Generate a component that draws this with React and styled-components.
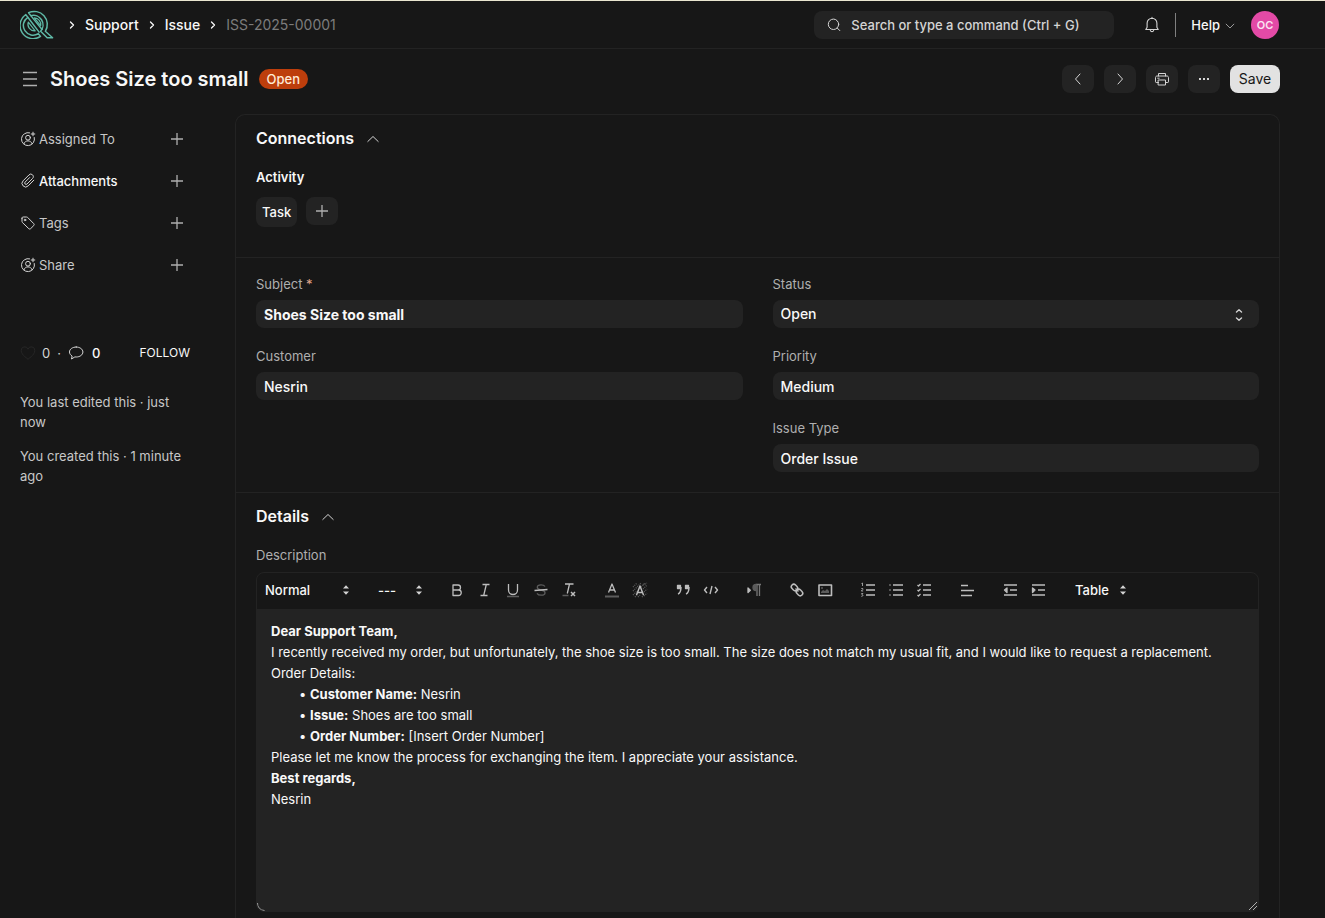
import React from "react";
import styled, { createGlobalStyle } from "styled-components";

const c = {
  bg: "#171717",
  control: "#232323",
  line: "#232323",
  text: "#f8f8f8",
  soft: "#d4d4d4",
  label: "#afafaf",
  muted: "#7c7c7c",
};

const GlobalStyle = createGlobalStyle`
  *, *::before, *::after { box-sizing: border-box; }
  body {
    margin: 0;
    background: ${c.bg};
    color: ${c.text};
    font-family: Inter, "Liberation Sans", sans-serif;
    font-size: 13px;
    line-height: 20px;
    color-scheme: dark;
  }
  button, input, select { font: inherit; color: inherit; }
  a { color: inherit; text-decoration: none; }
  svg { display: block; flex: none; }
`;

const Page = styled.div`
  min-height: 100vh;
  display: flex;
  flex-direction: column;
  border-top: 1px solid #e9e6d0;
`;

const Navbar = styled.header`
  display: flex;
  align-items: center;
  justify-content: space-between;
  height: 48px;
  padding: 0 46px 0 20px;
  border-bottom: 1px solid ${c.line};
`;

const Crumbs = styled.nav`
  display: flex;
  align-items: center;
  gap: 9px;
  font-size: 14px;
  font-weight: 500;
`;

const LogoLink = styled.a`
  margin-right: 5px;
`;

const Current = styled.span`
  color: ${c.muted};
  font-weight: 400;
`;

const NavTools = styled.div`
  display: flex;
  align-items: center;
`;

const Search = styled.label`
  display: flex;
  align-items: center;
  gap: 9px;
  width: 300px;
  height: 28px;
  margin-right: 29px;
  padding: 0 12px;
  border-radius: 8px;
  background: ${c.control};
`;

const SearchInput = styled.input`
  flex: 1;
  min-width: 0;
  padding: 0;
  border: 0;
  outline: 0;
  background: none;
  font-size: 13px;
  font-weight: 500;
  &::placeholder { color: ${c.soft}; opacity: 1; }
`;

const PlainButton = styled.button`
  display: flex;
  align-items: center;
  gap: ${(p) => p.$gap || 0}px;
  padding: 0;
  border: 0;
  background: none;
  color: ${(p) => p.$color || c.text};
  font-weight: ${(p) => p.$weight || 400};
  font-size: ${(p) => p.$size || 13}px;
`;

const Divider = styled.span`
  width: 1px;
  height: 24px;
  margin: 0 15px 0 14px;
  background: #808080;
`;

const Avatar = styled.button`
  width: 28px;
  height: 28px;
  margin-left: 15px;
  padding: 0;
  border: 0;
  border-radius: 50%;
  background: #e34aa6;
  color: #fbe4f2;
  font-size: 11px;
  font-weight: 600;
`;

const PageHead = styled.div`
  display: flex;
  align-items: center;
  justify-content: space-between;
  padding: 16px 45px 21px 20px;
`;

const TitleGroup = styled.div`
  display: flex;
  align-items: center;
`;

const Title = styled.h1`
  margin: 0 10px;
  font-size: 20px;
  line-height: 28px;
  font-weight: 600;
`;

const Badge = styled.span`
  padding: 0 8px;
  border-radius: 10px;
  background: #bd3e0c;
  color: #ffead6;
  font-weight: 500;
`;

const Actions = styled.div`
  display: flex;
  gap: 10px;
`;

const IconButton = styled.button`
  display: flex;
  align-items: center;
  justify-content: center;
  width: 32px;
  height: 28px;
  padding: 0;
  border: 0;
  border-radius: 8px;
  background: ${c.control};
  color: ${c.soft};
`;

const SaveButton = styled.button`
  width: 50px;
  height: 28px;
  padding: 0;
  border: 0;
  border-radius: 8px;
  background: #e2e2e2;
  color: #171717;
  font-size: 14px;
`;

const Body = styled.div`
  flex: 1;
  display: grid;
  grid-template-columns: 215px minmax(0, 1fr);
  padding: 0 45px 0 20px;
`;

const Sidebar = styled.aside`
  width: 170px;
  padding-top: 11px;
`;

const SideList = styled.ul`
  display: flex;
  flex-direction: column;
  gap: 14px;
  margin: 0;
  padding: 0;
  list-style: none;
`;

const SideRow = styled.li`
  display: flex;
  align-items: center;
  gap: 3px;
  height: 28px;
  padding-right: 7px;
  color: ${(p) => (p.$strong ? c.text : "#c7c7c7")};
  font-weight: ${(p) => (p.$strong ? 500 : 400)};
`;

const SideLabel = styled.span`
  flex: 1;
`;

const Stats = styled.div`
  display: flex;
  align-items: center;
  gap: 7px;
  margin-top: 64px;
  color: ${c.soft};
`;

const Follow = styled(PlainButton)`
  margin-left: auto;
`;

const Activity = styled.div`
  display: flex;
  flex-direction: column;
  gap: 14px;
  margin-top: 29px;
  color: #c7c7c7;
`;

const Note = styled.p`
  margin: 0;
`;

const Card = styled.main`
  border: 1px solid ${c.line};
  border-bottom: 0;
  border-radius: 10px 10px 0 0;
`;

const Section = styled.section`
  padding: ${(p) => p.$top || 11}px 20px ${(p) => p.$bottom || 20}px;
  & + & { border-top: 1px solid ${c.line}; }
`;

const SectionTitle = styled.h2`
  display: flex;
  align-items: center;
  gap: 12px;
  margin: 0;
  font-size: 16px;
  line-height: 24px;
  font-weight: 600;
`;

const SubTitle = styled.h3`
  margin: 17px 0 10px;
  font-size: 13px;
  line-height: 20px;
  font-weight: 600;
`;

const Links = styled.div`
  display: flex;
  gap: 9px;
`;

const DocLink = styled.a`
  padding: 5px 6px;
  border-radius: 8px;
  background: ${c.control};
  font-weight: 500;
`;

const Columns = styled.div`
  display: grid;
  grid-template-columns: 1fr 1fr;
  gap: 30px;
`;

const Column = styled.div`
  display: flex;
  flex-direction: column;
  gap: 18px;
`;

const Field = styled.div`
  display: flex;
  flex-direction: column;
  gap: 6px;
`;

const FieldLabel = styled.label`
  color: ${c.label};
`;

const Required = styled.span`
  color: #e0a68a;
`;

const fieldBox = `
  width: 100%;
  height: 28px;
  padding: 0 8px;
  border: 0;
  outline: 0;
  border-radius: 8px;
  background: ${c.control};
  font-size: 14px;
`;

const TextInput = styled.input`
  ${fieldBox}
  font-weight: ${(p) => (p.$bold ? 700 : 500)};
`;

const SelectWrap = styled.div`
  position: relative;
  svg {
    position: absolute;
    right: 14px;
    top: 9px;
    pointer-events: none;
  }
`;

const Select = styled.select`
  ${fieldBox}
  appearance: none;
  font-weight: 500;
`;

const EditorLabel = styled.div`
  margin: 17px 0 7px;
  color: ${c.label};
`;

const Editor = styled.div`
  position: relative;
  display: flex;
  flex-direction: column;
  border: 1px solid ${c.line};
  border-radius: 8px;
  overflow: hidden;
`;

const Toolbar = styled.div`
  display: flex;
  align-items: center;
  gap: 15px;
  height: 36px;
  padding-bottom: 3px;
`;

const ToolGroup = styled.div`
  display: flex;
`;

const Tool = styled.button`
  width: 28px;
  height: 24px;
  padding: 3px 5px;
  border: 0;
  background: none;
`;

const Picker = styled.div`
  position: relative;
  width: ${(p) => p.$width}px;
  svg {
    position: absolute;
    right: 0;
    top: 1px;
    pointer-events: none;
  }
`;

const PickerSelect = styled.select`
  display: block;
  width: 100%;
  height: 20px;
  padding: 0 0 0 8px;
  border: 0;
  outline: 0;
  appearance: none;
  background: ${c.bg};
  font-weight: 500;
`;

const Content = styled.div`
  min-height: 302px;
  padding: 12px 14px;
  background: ${c.control};
  line-height: 21px;
  outline: 0;
  p { margin: 0; }
  ul { margin: 0; padding-left: 39px; list-style: none; }
  li { position: relative; }
  li::before {
    content: "•";
    position: absolute;
    left: -11px;
  }
  b { font-weight: 700; }
`;

const CornerLeft = styled.svg`
  position: absolute;
  left: 0;
  bottom: 0;
`;

const CornerRight = styled.svg`
  position: absolute;
  right: 0;
  bottom: 0;
`;

/* ---------- icons ---------- */

const Icon = ({ size = 16, box = 16, width = 1, children, ...rest }) => (
  <svg width={size} height={size} viewBox={`0 0 ${box} ${box}`} fill="none" stroke="currentColor"
    strokeWidth={width} strokeLinecap="round" strokeLinejoin="round" aria-hidden="true" {...rest}>
    {children}
  </svg>
);

const Logo = () => (
  <svg width="34" height="29" viewBox="0 0 34 29" fill="none" stroke="#5fb8a6" strokeWidth="1.5" strokeLinejoin="round" aria-hidden="true">
    <path d="M5.800 4.600A13 13 0 0 0 20.500 26.400L18.300 23.600A9.600 9.600 0 0 1 7.800 7.300z" />
    <path d="M8.600 2.700A13 13 0 0 1 25.300 21.300L32.600 27.800H27.200L20.600 21.200A9.600 9.600 0 0 0 10.800 5.600z" />
    <path d="M7.800 7.300L19.500 22.600M10.800 5.600L22.500 20" />
    <path d="M8.300 12.200A6.600 6.600 0 0 0 15.200 20.900zM14.300 7.900A6.600 6.600 0 0 1 20.700 15.700z" strokeWidth="1.200" />
  </svg>
);

const CrumbArrow = () => (
  <Icon size={8} box={8} width={1.3}><path d="M2.500 1l3 3-3 3" /></Icon>
);

const Plus = ({ size = 12 }) => (
  <Icon size={size} box={12} width={1.3} color="#afafaf"><path d="M6 0v12M0 6h12" strokeLinecap="butt" /></Icon>
);

const UserPlus = () => (
  <Icon color={c.soft}>
    <path d="M9.600 1.800A6.500 6.500 0 1 0 14.300 6.500" />
    <circle cx="8" cy="6.700" r="2.400" />
    <path d="M3.900 12.800c.6-1.900 2.200-2.900 4.100-2.900s3.500 1 4.100 2.900M13 1.200v3.600M11.200 3h3.600" />
  </Icon>
);

const Clip = () => (
  <Icon color={c.soft}>
    <path d="M13.800 7.200l-5.600 5.700a3.600 3.600 0 0 1-5.100-5.100l5.900-5.900a2.500 2.500 0 0 1 3.600 0c1 1 1 2.500 0 3.500L7 11a1.300 1.300 0 0 1-1.900-1.900l4.600-4.600" />
  </Icon>
);

const Tag = () => (
  <Icon color={c.soft}>
    <path d="M2 3.200v3.300c0 .4.100.7.400 1l6.400 6.200c.5.500 1.300.5 1.800 0l3.200-3.200c.5-.5.500-1.300 0-1.800L7.600 2.400c-.3-.3-.6-.4-1-.4H3.200C2.500 2 2 2.500 2 3.200z" />
    <circle cx="5" cy="5" r=".8" />
  </Icon>
);

const Heart = () => (
  <Icon color="#262626">
    <path d="M8 14S1.200 10.200 1.200 5.600A3.500 3.500 0 0 1 8 4.200a3.500 3.500 0 0 1 6.800 1.400C14.800 10.200 8 14 8 14z" />
  </Icon>
);

const Comment = () => (
  <Icon color={c.soft}>
    <path d="M8.200 2C4.500 2 1.500 4.100 1.500 7c0 1.700 1 3.100 2.600 4L3.500 14l3.400-2.100 1.300.1c3.700 0 6.700-2.200 6.700-5S11.900 2 8.200 2z" />
  </Icon>
);

const Bell = () => (
  <Icon size={18} box={18} width={1.100} color={c.soft}>
    <path d="M2.800 13.500h12.400l-1.300-2.300V7.200a4.900 4.900 0 0 0-9.800 0v4L2.800 13.500zM9 1.200v1.200M7.300 14.400a1.800 1.800 0 0 0 3.400 0" />
  </Icon>
);

const SearchIcon = () => (
  <Icon color={c.soft}><circle cx="7.500" cy="7.300" r="5.200" /><path d="M11.300 11.100l2.500 2.500" /></Icon>
);

const Chevron = ({ up, size = 14 }) => (
  <Icon size={size} box={14} color={up ? c.soft : c.label}>
    <path d={up ? "M1.800 10.500L7 5.500l5.200 5" : "M2.500 6l4.500 4.500L11.500 6"} />
  </Icon>
);

const Printer = () => (
  <Icon>
    <path d="M4.500 5V2.500h7V5M4.500 11.500H2.200c-.4 0-.7-.3-.7-.7V6.500C1.500 5.700 2.200 5 3 5h10c.8 0 1.500.7 1.500 1.500v4.300c0 .4-.3.7-.7.7h-2.300M4.500 9h7v5h-7zM3.700 7.200h1.500" />
  </Icon>
);

const Dots = () => (
  <Icon size={12} box={12} fill="currentColor" stroke="none">
    <rect x="1" y="5" width="2" height="2" /><rect x="5" y="5" width="2" height="2" /><rect x="9" y="5" width="2" height="2" />
  </Icon>
);

const UpDown = () => (
  <Icon size={12} box={12} width={1.400} color={c.soft}><path d="M3.500 3L6 .8 8.500 3M3.500 9L6 11.200 8.500 9" /></Icon>
);

const PickerArrows = () => (
  <svg width="18" height="18" viewBox="0 0 18 18" fill={c.soft} aria-hidden="true">
    <path d="M6 7.500L9 4.200l3 3.300zM6 10.500l3 3.300 3-3.300z" />
  </svg>
);

const S = "#bdbdbd";
const DIM = "#5c5c5c";

const GLYPHS = {
  Bold: <path d="M5 4h5a2.500 2.500 0 0 1 0 5H5zM5 9h5.500a2.500 2.500 0 0 1 0 5.500H5z" />,
  Italic: <path d="M6.500 3.500h7M4.500 14.500h7M10.300 3.500L7.700 14.500" />,
  Underline: <><path d="M4.500 3v6a4.500 4.500 0 0 0 9 0V3" /><path d="M3 15.500h12" stroke={DIM} /></>,
  Strike: <><path d="M13 5.500C12.200 4.200 10.800 3.800 9 3.800c-2.300 0-3.700 1-3.700 2.500C5.300 8 7 8.600 9 9s4 1 4 2.700c0 1.600-1.600 2.500-3.800 2.500-1.900 0-3.400-.6-4.200-1.900" stroke={DIM} /><path d="M2.500 9.500l13-1" /></>,
  "Clear formatting": <><path d="M5 3h8.500M9.500 3L7.300 12.500" /><path d="M2.500 14.500h6" stroke={DIM} /><path d="M11 11l4 4M15 11l-4 4" strokeWidth="1.500" /></>,
  "Text colour": <><path d="M5.500 11.500L9 3l3.500 8.500M6.500 9h5" strokeWidth="1.300" /><path d="M2 15.500h14" stroke={DIM} strokeWidth="2" /></>,
  "Background colour": <><path d="M2 6l4-4M2 10l8-8M2 14l4-4M10 6l4-4M4 16l2-2M12 8l4-4M12 4l4-2M13 11l3-3M13 15l3-3M7 16l2-2M11 16l2-2" stroke={DIM} strokeDasharray="1 1" /><path d="M5.500 14L9 5l3.500 9M6.500 11.500h5" strokeWidth="1.500" /></>,
  Quote: <><rect x="3.500" y="4.500" width="3" height="3" fill={S} /><rect x="11.500" y="4.500" width="3" height="3" fill={S} /><path d="M7 6c0 4-.5 6-3 7M15 6c0 4-.5 6-3 7" strokeWidth="1.400" /></>,
  Code: <path d="M5 6L2.500 9 5 12M13 6l2.500 3-2.500 3M10 5L8 13" strokeWidth="1.400" />,
  Direction: <><path d="M3 7v4.500L5.300 9.200z" fill={S} /><path d="M12 4v11M14.500 4v11M16 3.500h-5" stroke="#777" /><path d="M11 3.500a3 3 0 0 0 0 6z" fill={DIM} stroke={DIM} /></>,
  Link: <><rect x="-3.500" y="-2.500" width="7" height="5" rx="2.500" transform="translate(6.500 6.500) rotate(45)" strokeWidth="1.500" /><rect x="-3.500" y="-2.500" width="7" height="5" rx="2.500" transform="translate(11.500 11.500) rotate(45)" strokeWidth="1.500" /><path d="M7.500 7.500l3 3" strokeWidth="1.500" /></>,
  Image: <><rect x="3" y="4" width="12.500" height="10.500" strokeWidth="1.600" /><path d="M5 12v-1l2-2 2 1 2-2 2 2v2z" fill={DIM} stroke="none" /><circle cx="6" cy="7" r="1" fill={DIM} stroke="none" /></>,
  "Ordered list": <><path d="M7 4h9M7 9h9M7 14h9" /><path d="M2.500 2.500l1-.5v3M2.300 7.500h1.500v1L2.300 10h1.800M2.300 12.500h1.600l-1 1.200c1.500 0 1.200 2-.6 1.600" strokeWidth=".8" /></>,
  "Bullet list": <><path d="M6 4h10M6 9h10M6 14h10" /><path d="M2.500 4h1M2.500 9h1M2.500 14h1" /></>,
  Checklist: <><path d="M8 4h8M8 9h8M8 14h8" /><path d="M2.500 4l1 1 2-2M2.500 9l1 1 2-2M2.500 14l1 1 2-2" strokeWidth="1.300" /></>,
  Align: <path d="M3 4.500h7M3 9.500h13M3 14.500h11" />,
  Outdent: <><path d="M3 4h13M3 14h13M9 9h7" /><path d="M6 7v4.500L3.500 9z" fill={S} /></>,
  Indent: <><path d="M3 4h13M3 14h13M9 9h7" /><path d="M3.500 7v4.500L6 9z" fill={S} /></>,
};

const ToolButton = ({ name }) => (
  <Tool type="button" aria-label={name}>
    <Icon size={18} box={18} width={1.3} color={S} strokeLinecap="butt">{GLYPHS[name]}</Icon>
  </Tool>
);

const Tools = ({ names }) => (
  <ToolGroup>{names.map((n) => <ToolButton key={n} name={n} />)}</ToolGroup>
);

const ToolPicker = ({ width, label, value }) => (
  <Picker $width={width}>
    <PickerSelect aria-label={label}><option>{value}</option></PickerSelect>
    <PickerArrows />
  </Picker>
);

const SideItem = ({ icon, label, strong }) => (
  <SideRow $strong={strong}>
    {icon}
    <SideLabel>{label}</SideLabel>
    <PlainButton type="button" aria-label={`Add: ${label}`}><Plus /></PlainButton>
  </SideRow>
);

const TextField = ({ id, label, value, required, bold }) => (
  <Field>
    <FieldLabel htmlFor={id}>{label}{required && <Required> *</Required>}</FieldLabel>
    <TextInput id={id} defaultValue={value} $bold={bold} />
  </Field>
);

export default function App() {
  return (
    <Page>
      <GlobalStyle />
      <Navbar>
        <Crumbs aria-label="Breadcrumb">
          <LogoLink href="#home" aria-label="Home"><Logo /></LogoLink>
          <CrumbArrow />
          <a href="#support">Support</a>
          <CrumbArrow />
          <a href="#issue">Issue</a>
          <CrumbArrow />
          <Current>ISS-2025-00001</Current>
        </Crumbs>
        <NavTools>
          <Search>
            <SearchIcon />
            <SearchInput aria-label="Search" placeholder="Search or type a command (Ctrl + G)" />
          </Search>
          <PlainButton type="button" aria-label="Notifications"><Bell /></PlainButton>
          <Divider />
          <PlainButton type="button" $gap={4} $weight={500}>Help <Chevron size={12} /></PlainButton>
          <Avatar type="button">OC</Avatar>
        </NavTools>
      </Navbar>

      <PageHead>
        <TitleGroup>
          <PlainButton type="button" aria-label="Toggle sidebar" $color={c.label}>
            <svg width="20" height="20" viewBox="0 0 20 20" stroke="currentColor" strokeWidth="1.300" aria-hidden="true">
              <path d="M3 3.500h14M3 10h14M3 16.500h14" />
            </svg>
          </PlainButton>
          <Title>Shoes Size too small</Title>
          <Badge>Open</Badge>
        </TitleGroup>
        <Actions>
          <IconButton type="button" aria-label="Previous"><Icon><path d="M10 3L5.500 8l4.500 5" /></Icon></IconButton>
          <IconButton type="button" aria-label="Next"><Icon><path d="M6 3l4.500 5L6 13" /></Icon></IconButton>
          <IconButton type="button" aria-label="Print"><Printer /></IconButton>
          <IconButton type="button" aria-label="More"><Dots /></IconButton>
          <SaveButton type="button">Save</SaveButton>
        </Actions>
      </PageHead>

      <Body>
        <Sidebar>
          <SideList>
            <SideItem icon={<UserPlus />} label="Assigned To" />
            <SideItem icon={<Clip />} label="Attachments" strong />
            <SideItem icon={<Tag />} label="Tags" />
            <SideItem icon={<UserPlus />} label="Share" />
          </SideList>
          <Stats>
            <PlainButton type="button" $gap={6} $color={c.soft}><Heart /> 0</PlainButton>
            <span>·</span>
            <PlainButton type="button" $gap={8} $weight={500}><Comment /> 0</PlainButton>
            <Follow type="button" $size={12}>FOLLOW</Follow>
          </Stats>
          <Activity>
            <Note>You last edited this · just now</Note>
            <Note>You created this · 1 minute ago</Note>
          </Activity>
        </Sidebar>

        <Card>
          <Section $bottom={30}>
            <SectionTitle>Connections <Chevron up /></SectionTitle>
            <SubTitle>Activity</SubTitle>
            <Links>
              <DocLink href="#task">Task</DocLink>
              <IconButton type="button" aria-label="New task"><Plus /></IconButton>
            </Links>
          </Section>

          <Section $top={16}>
            <Columns>
              <Column>
                <TextField id="subject" label="Subject" value="Shoes Size too small" required bold />
                <TextField id="customer" label="Customer" value="Nesrin" />
              </Column>
              <Column>
                <Field>
                  <FieldLabel htmlFor="status">Status</FieldLabel>
                  <SelectWrap>
                    <Select id="status"><option>Open</option></Select>
                    <UpDown />
                  </SelectWrap>
                </Field>
                <TextField id="priority" label="Priority" value="Medium" />
                <TextField id="type" label="Issue Type" value="Order Issue" />
              </Column>
            </Columns>
          </Section>

          <Section $bottom={6}>
            <SectionTitle>Details <Chevron up /></SectionTitle>
            <EditorLabel id="description-label">Description</EditorLabel>
            <Editor>
              <Toolbar role="toolbar" aria-label="Formatting">
                <ToolPicker width={98} label="Heading" value="Normal" />
                <ToolPicker width={58} label="Font size" value="---" />
                <Tools names={["Bold", "Italic", "Underline", "Strike", "Clear formatting"]} />
                <Tools names={["Text colour", "Background colour"]} />
                <Tools names={["Quote", "Code"]} />
                <Tools names={["Direction"]} />
                <Tools names={["Link", "Image"]} />
                <Tools names={["Ordered list", "Bullet list", "Checklist"]} />
                <Tools names={["Align"]} />
                <Tools names={["Outdent", "Indent"]} />
                <ToolPicker width={65} label="Table" value="Table" />
              </Toolbar>
              <Content contentEditable suppressContentEditableWarning role="textbox" aria-multiline="true"
                aria-labelledby="description-label" spellCheck={false}>
                <p><b>Dear Support Team,</b></p>
                <p>I recently received my order, but unfortunately, the shoe size is too small. The size does not match my usual fit, and I would like to request a replacement.</p>
                <p>Order Details:</p>
                <ul>
                  <li><b>Customer Name:</b> Nesrin</li>
                  <li><b>Issue:</b> Shoes are too small</li>
                  <li><b>Order Number:</b> [Insert Order Number]</li>
                </ul>
                <p>Please let me know the process for exchanging the item. I appreciate your assistance.</p>
                <p><b>Best regards,</b></p>
                <p>Nesrin</p>
              </Content>
              <CornerLeft width="8" height="8" fill="none" stroke="#9a9a9a" aria-hidden="true"><path d="M.5 0A7 7 0 0 0 7.500 7.500" /></CornerLeft>
              <CornerRight width="10" height="10" fill="none" stroke="#b0b0b0" aria-hidden="true"><path d="M1 9L9 1M5 9l4-4" /></CornerRight>
            </Editor>
          </Section>
        </Card>
      </Body>
    </Page>
  );
}
